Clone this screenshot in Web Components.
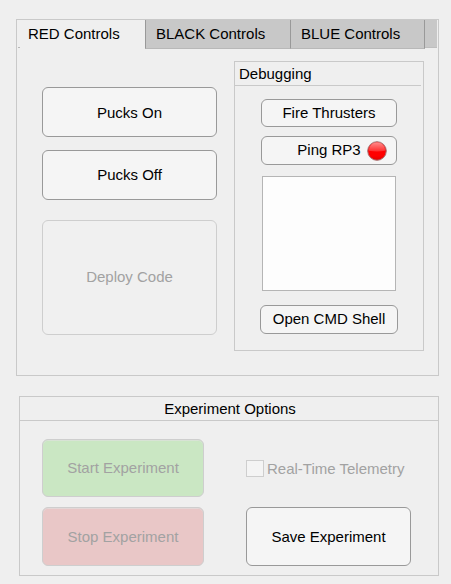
<!DOCTYPE html>
<html lang="en">
<head>
<meta charset="utf-8">
<title>Experiment Controls</title>
<style>
html, body { margin: 0; background: #efefef; }
body { width: 451px; height: 584px; overflow: hidden; font: 15px/17px "Liberation Sans", Arial, sans-serif; color: #000; }
</style>
</head>
<body>
<control-app></control-app>
<script>
const define = (name, html) => customElements.define(name, class extends HTMLElement {
  constructor() {
    super();
    const t = document.createElement('template');
    t.innerHTML = html;
    this.attachShadow({ mode: 'open' }).appendChild(t.content.cloneNode(true));
  }
});

define('push-button', `<style>
:host { display: block; box-sizing: border-box; height: var(--bh); width: var(--bw, auto); }
button { display: flex; align-items: center; justify-content: center; width: 100%; height: 100%; box-sizing: border-box;
  margin: 0; padding: var(--pad, 0); border: 1px solid #999; border-radius: 6px; background: #f5f5f5; font: inherit; color: #000; white-space: nowrap; }
:host([disabled]) button { border-color: #cecece; background: var(--fill, #f0f0f0); color: #a2a2a2; }
:host([tinted]) button { box-shadow: inset 0 1px 0 rgba(225,225,225,.6); }
</style><button><slot></slot></button>`);

define('status-lamp', `<style>:host { display: block; width: 20px; height: 20px; } svg { display: block; }</style>
<svg width="20" height="20" viewBox="0 0 20 20">
<defs><linearGradient id="b" x2="0" y2="1"><stop offset="0" stop-color="#f44"/><stop offset=".5" stop-color="#f00"/><stop offset=".75" stop-color="#f00"/><stop offset="1" stop-color="#e00000"/></linearGradient>
<linearGradient id="g" x2="0" y2="1"><stop offset="0" stop-color="#ff8a8a"/><stop offset="1" stop-color="#ff2c2c"/></linearGradient></defs>
<circle cx="10" cy="10" r="9.3" fill="url(#b)" stroke="#a57474" stroke-width="1"/>
<path d="M2 9.7C2 4.8 5.4 1.6 10 1.6s8 3.2 8 8.1Q10 11.2 2 9.7Z" fill="url(#g)"/></svg>`);

define('tab-item', `<style>
:host { display: block; box-sizing: border-box; height: 29px; padding: 5px 0 0 10px; background: #c8c8c8; border-left: 1px solid #999; border-bottom: 1px solid #b8b8b8; width: var(--w); white-space: nowrap; }
:host([selected]) { border-color: #efefef; background: linear-gradient(#b8b8b8, #b8b8b8) 0 100% / 2px 1px no-repeat #efefef; }
:host([last]) { border-right: 1px solid #999; }
</style><slot></slot>`);

define('tab-group', `<style>
:host { display: block; box-sizing: border-box; width: 423px; height: 357px; border: 1px solid #c9c9c9; }
nav { display: flex; height: 29px; margin-right: 1px; }
.rest { flex: 1; box-sizing: border-box; height: 28px; background: #c8c8c8; border-bottom: 1px solid #bebebe; }
</style><nav><slot name="tab"></slot><div class="rest"></div></nav><slot></slot>`);

define('titled-panel', `<style>
:host { display: block; box-sizing: border-box; border: 1px solid #c9c9c9; width: var(--w); height: var(--h); }
header { box-sizing: border-box; height: 24px; padding: 3px 0 0 var(--inset, 4px); margin-right: var(--gap, 0); border-bottom: 1px solid #c9c9c9; text-align: var(--align, left); }
</style><header><slot name="title"></slot></header><slot></slot>`);

define('check-box', `<style>
:host { display: flex; gap: 3px; height: 17px; color: #a2a2a2; white-space: nowrap; }
i { box-sizing: border-box; width: 18px; height: 17px; border: 1px solid #cecece; background: #f4f4f4; }
</style><i></i><span><slot></slot></span>`);

define('control-app', `<style>
:host { display: flex; flex-direction: column; gap: 20px; padding: 19px 0 0 16px; }
.page { display: flex; gap: 17px; padding: 12px 0 0 25px; }
.left { display: flex; flex-direction: column; width: 175px; padding-top: 26px; }
.debug { display: flex; flex-direction: column; align-items: center; padding: 13px 0 0; width: 188px; }
.ping { position: relative; margin-top: 9px; }
status-lamp { position: absolute; left: 106px; top: 5px; }
.log { box-sizing: border-box; width: 134px; height: 115px; margin: 11px 0 14px; border: 1px solid #b5b5b5; background: #fdfdfd; }
.exp { margin-left: 3px; }
.grid { display: grid; grid-template-columns: 162px 165px; column-gap: 42px; row-gap: 10px; grid-template-rows: 58px 59px; padding: 18px 0 0 22px; }
check-box { margin-top: 21px; }
</style>
<tab-group>
<tab-item slot="tab" selected style="--w:128px">RED Controls</tab-item>
<tab-item slot="tab" style="--w:145px">BLACK Controls</tab-item>
<tab-item slot="tab" last style="--w:135px">BLUE Controls</tab-item>
<div class="page">
<div class="left">
<push-button style="--bh:50px;--pad:1px 0 0">Pucks On</push-button>
<push-button style="--bh:50px;--pad:0 0 1px;margin-top:13px">Pucks Off</push-button>
<push-button disabled style="--bh:115px;--pad:0 0 2px;margin-top:20px">Deploy Code</push-button>
</div>
<titled-panel style="--w:190px;--h:290px;--gap:2px">
<span slot="title">Debugging</span>
<div class="debug">
<push-button style="--bw:136px;--bh:28px;--pad:0 0 1px">Fire Thrusters</push-button>
<div class="ping"><push-button style="--bw:136px;--bh:29px;--pad:0 0 2px">Ping RP3</push-button><status-lamp></status-lamp></div>
<div class="log"></div>
<push-button style="--bw:138px;--bh:29px;--pad:0 0 2px">Open CMD Shell</push-button>
</div>
</titled-panel>
</div>
</tab-group>
<titled-panel class="exp" style="--w:420px;--h:180px;--align:center;--inset:2px">
<span slot="title">Experiment Options</span>
<div class="grid">
<push-button disabled tinted style="--bh:58px;--pad:0 0 1px;--fill:#cae7c3">Start Experiment</push-button>
<check-box>Real-Time Telemetry</check-box>
<push-button disabled tinted style="--bh:59px;--fill:#e9c7c7">Stop Experiment</push-button>
<push-button style="--bh:59px">Save Experiment</push-button>
</div>
</titled-panel>`);
</script>
</body>
</html>
